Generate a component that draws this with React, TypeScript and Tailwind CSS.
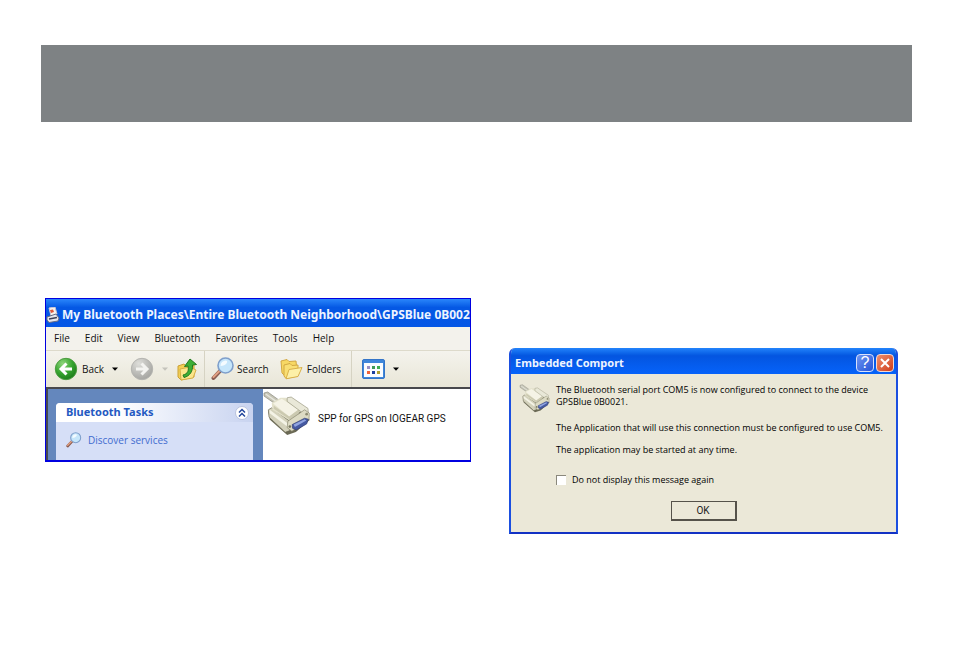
import { useState } from 'react';
import type { ReactNode } from 'react';

const MENU = ['File', 'Edit', 'View', 'Bluetooth', 'Favorites', 'Tools', 'Help'];

const VIEW_DOTS = [
  { x: 6, y: 8, fill: '#9a8fc4' },
  { x: 11, y: 8, fill: '#3f9a56' },
  { x: 16, y: 8, fill: '#3fae4f' },
  { x: 6, y: 13, fill: '#f0623a' },
  { x: 11, y: 13, fill: '#1d3f9e' },
  { x: 16, y: 13, fill: '#b0a030' },
];

function SerialPlug({ className = '' }: { className?: string }) {
  return (
    <svg viewBox="10 10 140 134" className={`shrink-0 ${className}`} aria-hidden="true">
      <path d="M26 72 L44 60 L140 74 L149 96 L108 132 L82 141 L30 95 Z" fill="#6b6a55" />
      <path d="M13 16 L24 13 L56 36 L46 48 L13 25 Z" fill="#c5c4b5" stroke="#86867b" strokeWidth="2" />
      <path d="M18 19 L48 40" stroke="#e6e6dd" strokeWidth="4" />
      <path d="M26 66 L36 60 L92 102 L90 128 L76 133 L28 88 Z" fill="#d3d1bb" stroke="#66654f" strokeWidth="2" />
      <path d="M30 66 L86 108 L84 117 L30 76 Z" fill="#f4f3e6" />
      <path d="M36 46 L62 30 L78 30 L126 62 L98 104 L38 66 Z" fill="#e3e1cb" />
      <path d="M40 47 L66 33 L116 65 L88 86 Z" fill="#f5f3e6" />
      <path d="M88 86 L116 65 L120 71 L98 101 L42 63 L42 54 Z" fill="#cbc9b0" />
      <path d="M82 30 L94 28 L144 62 L145 76 L137 82 L82 41 Z" fill="#e9e8d8" stroke="#98967e" strokeWidth="2" />
      <path d="M84 100 L134 66 L148 76 L147 94 L96 130 L82 119 Z" fill="#dddbc4" stroke="#88866d" strokeWidth="2" />
      <path d="M97 110 L134 91 L145 94 L140 108 L109 126 L98 121 Z" fill="#4559a2" stroke="#323d74" strokeWidth="2" />
      <path d="M101 110 L134 94 L139 98 L105 117 Z" fill="#91a5e0" />
      <circle cx="90" cy="116" r="4" fill="#77765e" />
      <circle cx="140" cy="79" r="4" fill="#8d8b72" />
    </svg>
  );
}

function ArrowDisc({ back = false }: { back?: boolean }) {
  const id = back ? 'discBack' : 'discForward';
  return (
    <svg viewBox="0 0 24 24" className="size-6 shrink-0" aria-hidden="true">
      <defs>
        <radialGradient id={id} cx="35%" cy="25%" r="80%">
          <stop offset="0%" stopColor={back ? '#8fd67c' : '#dededa'} />
          <stop offset="55%" stopColor={back ? '#37a52f' : '#bdbdb9'} />
          <stop offset="100%" stopColor={back ? '#1b7a1a' : '#a3a39f'} />
        </radialGradient>
      </defs>
      <circle cx="12" cy="12" r="10.7" fill={`url(#${id})`} stroke={back ? '#4b9c40' : '#b4b4b0'} />
      <path
        d={back ? 'M12.5 6.5 L7 12 L12.5 17.5 M7.5 12 H18' : 'M11.5 6.5 L17 12 L11.5 17.5 M16.5 12 H6'}
        fill="none"
        stroke={back ? '#fff' : '#f3f3f0'}
        strokeWidth="3"
      />
    </svg>
  );
}

function Magnifier({ className = '' }: { className?: string }) {
  return (
    <svg viewBox="0 0 24 24" className={`shrink-0 ${className}`} aria-hidden="true">
      <path d="M9 14 L2.5 21" stroke="#8a5b50" strokeWidth="4" strokeLinecap="round" />
      <path d="M8.5 14 L2.5 20" stroke="#e2a183" strokeWidth="2" strokeLinecap="round" />
      <circle cx="14.5" cy="8.5" r="7.5" fill="#c6e6fb" stroke="#7f9fcb" strokeWidth="1.6" />
      <path d="M9.5 9 A5.3 5.3 0 0 1 15 3.5 C18 4 15 9 9.5 9" fill="#f4fbff" />
    </svg>
  );
}

function UpFolder() {
  return (
    <svg viewBox="0 0 22 24" className="h-6 w-[22px] shrink-0" aria-hidden="true">
      <path d="M2 9 L8 7 L10 9 L18 8 L18 20 L5 23 L2 20 Z" fill="#f3cf55" stroke="#caa037" />
      <path d="M4 12 L14 10 L20 13 L17 21 L5 23 Z" fill="#fbe58a" stroke="#d7ae45" />
      <path d="M7 18 C12 17 13 13 12 9 L8.500 9.500 L14 2 L20.500 7.500 L16.500 8 C17 14 14 19 8 20.500 Z" fill="#3daf35" stroke="#23791f" />
    </svg>
  );
}

function FoldersIcon() {
  return (
    <svg viewBox="0 0 24 22" className="h-[22px] w-6 shrink-0" aria-hidden="true">
      <path d="M2 3 L8 1.500 L10 3.500 L17 3 L18 14 L5 17 L3 15 Z" fill="#f7d864" stroke="#d3a843" />
      <path d="M5 7 L11 5.500 L13 7.500 L19 7 L19 18 L7 20.500 L5 18 Z" fill="#f9df74" stroke="#d3a843" />
      <path d="M10 11.500 L23 9.500 L19 18.500 L7 20.800 Z" fill="#fdf0a8" stroke="#d9b04a" />
    </svg>
  );
}

function ViewsIcon() {
  return (
    <svg viewBox="0 0 23 20" className="h-5 w-[23px] shrink-0" aria-hidden="true">
      <rect x="0.500" y="0.500" width="22" height="19" rx="1.500" fill="#3f86da" stroke="#3575c8" />
      <rect x="2" y="4" width="19" height="14" fill="#fbfcff" />
      {VIEW_DOTS.map(d => (
        <rect key={`${d.x}-${d.y}`} x={d.x - 1} y={d.y - 1} width="3" height="3" fill={d.fill} />
      ))}
    </svg>
  );
}

function PlacesIcon() {
  return (
    <svg viewBox="0 0 14 16" className="h-4 w-3.5 shrink-0" aria-hidden="true">
      <path d="M3 1 L9 0 L11 7 L5 9 Z" fill="#f6f3f0" stroke="#c9c4d0" />
      <path d="M4 3 L7 2.500 L8 5 L5 6 Z" fill="#e0573a" />
      <path d="M1 10 L10 7 L13 11 L12 14 L3 15.500 L1 13 Z" fill="#e6e6ee" stroke="#6a6c83" />
      <path d="M3 12 L11 10.500" stroke="#3c3f55" strokeWidth="1.500" />
    </svg>
  );
}

function Caret({ muted = false }: { muted?: boolean }) {
  return (
    <svg viewBox="0 0 6 4" className={`h-1 w-1.5 shrink-0 ${muted ? 'text-[#c4c3bb]' : 'text-black'}`} aria-hidden="true">
      <path d="M0 0.500 H6 L3 3.800 Z" fill="currentColor" />
    </svg>
  );
}

function ToolButton({ label, children, className = '' }: { label: string; children: ReactNode; className?: string }) {
  return (
    <button type="button" aria-label={label} className={`flex items-center ${className}`}>
      {children}
    </button>
  );
}

function ExplorerWindow() {
  return (
    <section className="min-w-0 overflow-hidden border border-b-2 border-[#0000e0] bg-white font-['Open_Sans','Noto_Sans',sans-serif] text-[10px] text-[#111]">
      <header className="flex h-7 items-center gap-0.5 overflow-hidden bg-linear-to-b from-[#2a86fb] via-[#0558e4] via-30% to-[#0456e6] pt-1">
        <PlacesIcon />
        <h1 className="font-['Noto_Sans',sans-serif] text-xs font-bold whitespace-nowrap text-[#eef4ff]">
          My Bluetooth Places\Entire Bluetooth Neighborhood\GPSBlue 0B002
        </h1>
      </header>

      <nav className="flex h-6 items-center gap-[15px] border-b border-[#dddacb] bg-[#f3f2ec] pl-2">
        {MENU.map(item => <button key={item} type="button">{item}</button>)}
      </nav>

      {/* Toolbar */}
      <div className="flex h-9 items-center bg-linear-to-b from-[#f4f3ed] to-[#e9e6d7] pl-2">
        <ToolButton label="Back" className="gap-1">
          <ArrowDisc back />
          <span>Back</span>
          <span className="pl-1"><Caret /></span>
        </ToolButton>
        <ToolButton label="Forward" className="ml-3 gap-2">
          <ArrowDisc />
          <Caret muted />
        </ToolButton>
        <ToolButton label="Up" className="ml-2"><UpFolder /></ToolButton>
        <span className="mx-1.5 h-full w-px bg-[#d6d3c3]" />
        <ToolButton label="Search" className="gap-0.5">
          <Magnifier className="size-6" />
          <span>Search</span>
        </ToolButton>
        <ToolButton label="Folders" className="ml-2.5 gap-1">
          <FoldersIcon />
          <span>Folders</span>
        </ToolButton>
        <span className="mx-2.5 h-full w-px bg-[#d6d3c3]" />
        <ToolButton label="Views" className="gap-2">
          <ViewsIcon />
          <Caret />
        </ToolButton>
      </div>

      <div className="flex h-[73px] border-t-2 border-l-2 border-[#48484c]">
        <aside className="w-[215px] shrink-0 bg-[#6487bd] pt-3.5 pr-2.5 pl-2">
          <div className="flex h-full flex-col overflow-hidden rounded-t-sm bg-[#d6dff7]">
            <div className="flex h-[19px] items-center justify-between bg-linear-to-r from-white from-30% to-[#c8d3f0] pr-1 pl-2.5">
              <h2 className="font-['Noto_Sans',sans-serif] text-[11px] font-bold text-[#2459c2]">Bluetooth Tasks</h2>
              <button type="button" aria-label="Collapse">
                <svg viewBox="0 0 14 14" className="size-3.5">
                  <circle cx="7" cy="7" r="6.500" fill="#fff" stroke="#b9c2dc" />
                  <path d="M4 6.500 L7 3.500 L10 6.500 M4 10.500 L7 7.500 L10 10.500" fill="none" stroke="#24479c" strokeWidth="1.500" />
                </svg>
              </button>
            </div>
            <a href="#discover" className="flex items-center gap-1.5 pt-2.5 pl-2.5 text-[#3f6ccf]">
              <Magnifier className="size-4" />
              Discover services
            </a>
          </div>
        </aside>
        <div className="flex min-w-0 flex-1 items-start gap-2">
          <SerialPlug className="mt-0.5 h-[45px] w-[47px]" />
          <span className="pt-[22px] font-['Roboto',sans-serif] whitespace-nowrap">SPP for GPS on IOGEAR GPS</span>
        </div>
      </div>
    </section>
  );
}

function ComportDialog() {
  const [hide, setHide] = useState(false);

  return (
    <section role="dialog" aria-labelledby="comport-title" className="mt-[50px] min-w-0 overflow-hidden rounded-t-md border-2 border-t-0 border-[#1b4fe0] border-b-[#1231c4] bg-[#ebe8d8]">
      <header className="flex h-[26px] items-center gap-0.5 bg-linear-to-b from-[#2383fb] via-[#0455e0] via-30% to-[#0663fa] pt-1 pr-0.5 pl-1">
        <h2 id="comport-title" className="flex-1 font-['Noto_Sans',sans-serif] text-[11px] font-bold text-[#eef4ff]">Embedded Comport</h2>
        <button type="button" aria-label="Help" className="grid size-[18px] place-items-center rounded-sm border border-[#d8e2fb] bg-linear-to-br from-[#6f95f2] to-[#2753d6] font-['Liberation_Sans',sans-serif] text-base leading-none text-white">
          ?
        </button>
        <button type="button" aria-label="Close" className="grid size-[18px] place-items-center rounded-sm border border-[#f4d9d2] bg-linear-to-br from-[#ee8d6c] to-[#cf3a14]">
          <svg viewBox="0 0 12 12" className="size-3"><path d="M2 2 L10 10 M10 2 L2 10" stroke="#fff" strokeWidth="2" /></svg>
        </button>
      </header>

      <div className="flex gap-1.5 pt-2.5 pl-2 font-['Open_Sans',sans-serif] text-[9px] leading-3 text-black">
        <SerialPlug className="h-[29px] w-[31px]" />
        <div className="min-w-0 flex-1">
          <p>The Bluetooth serial port COM5 is now configured to connect to the device<br />GPSBlue 0B0021.</p>
          <p className="mt-3.5 whitespace-nowrap">The Application that will use this connection must be configured to use COM5.</p>
          <p className="mt-2.5">The application may be started at any time.</p>
          <label className="mt-[18px] flex items-center gap-1.5">
            <input
              type="checkbox"
              checked={hide}
              onChange={e => setHide(e.target.checked)}
              className="size-2.5 appearance-none border-t border-l border-[#8a887c] bg-white checked:bg-blue-700"
            />
            Do not display this message again
          </label>
        </div>
      </div>

      <div className="flex justify-center pt-[15px] pb-[11px]">
        <button type="button" className="h-5 w-[66px] border border-r-2 border-b-2 border-[#55524a] font-['Roboto',sans-serif] text-[10px] leading-none text-[#222]">OK</button>
      </div>
    </section>
  );
}

export default function App() {
  return (
    <div className="min-h-screen bg-white pt-[45px]">
      <div className="mr-[42px] ml-[41px] h-[77px] bg-[#7e8284]" />
      <main className="mt-44 mr-14 ml-[45px] grid grid-cols-[426fr_389fr] items-start gap-[38px]">
        <ExplorerWindow />
        <ComportDialog />
      </main>
    </div>
  );
}
